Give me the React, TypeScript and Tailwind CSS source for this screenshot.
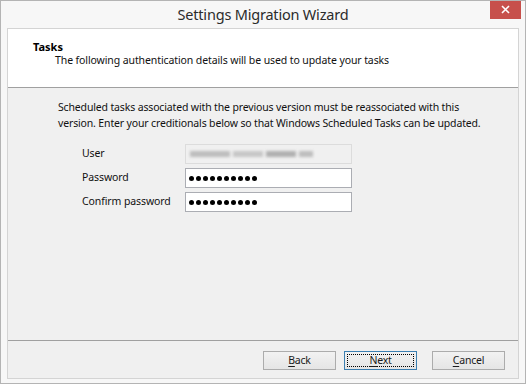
import React from 'react';

const font = { fontFamily: '"Noto Sans", "Open Sans", sans-serif' };

const Dots: React.FC = () => (
  <div className="flex items-center gap-[2px]">
    {Array.from({ length: 10 }).map((_, i) => (
      <span key={i} className="block w-[5px] h-[5px] rounded-full bg-black" />
    ))}
  </div>
);

const Btn: React.FC<{ label: string; first: string; focused?: boolean }> = ({ label, first, focused }) => (
  <button
    className={`w-[73px] h-[19px] flex items-center justify-center text-[10.5px] tracking-[-0.2px] text-[#1a1a1a] border bg-gradient-to-b from-[#f2f2f2] to-[#e5e5e5] ${
      focused ? 'border-[#3c7fb1] p-[2px]' : 'border-[#acacac]'
    }`}
  >
    {focused ? (
      <span className="w-full h-full flex items-center justify-center border border-dotted border-black">
        <span className="underline underline-offset-2">{first}</span>
        {label.slice(1)}
      </span>
    ) : (
      <>
        <span className="underline underline-offset-2">{first}</span>
        {label.slice(1)}
      </>
    )}
  </button>
);

export default function App() {
  return (
    <div
      style={font}
      className="w-[526px] h-[384px] bg-[#f7f7f7] border border-[#b4b4b4] flex flex-col overflow-hidden"
    >
      {/* title bar */}
      <div className="h-[27px] relative flex items-center justify-center shrink-0">
        <span className="text-[14.5px] tracking-[-0.2px] text-[#2b2b2b] mt-[1px]">Settings Migration Wizard</span>
        <div className="absolute top-[-1px] right-[4px] w-[31px] h-[19px] bg-[#c7504b] flex items-center justify-center">
          <svg width="9" height="9" viewBox="0 0 9 9">
            <path d="M1 1 L8 8 M8 1 L1 8" stroke="white" strokeWidth="1.6" />
          </svg>
        </div>
      </div>

      {/* client area */}
      <div className="mx-[6px] mb-[4px] flex-1 flex flex-col border border-[#d4d4d4] bg-[#f0f0f0]">
        <div className="h-[59px] bg-white border-b border-[#a0a0a0] pl-[25px] pt-[11px] shrink-0">
          <div className="text-[11px] font-bold text-black leading-[13px]">Tasks</div>
          <div className="text-[10.5px] tracking-[-0.1px] text-[#111] pl-[22px] leading-[15px]">
            The following authentication details will be used to update your tasks
          </div>
        </div>

        <div className="flex-1 pl-[50px] pt-[11px]">
          <div className="text-[10.5px] tracking-[-0.15px] leading-[16px] text-[#111] whitespace-nowrap">
            <div>Scheduled tasks associated with the previous version must be reassociated with this</div>
            <div>version. Enter your creditionals below so that Windows Scheduled Tasks can be updated.</div>
          </div>

          <div className="mt-[13px] pl-[24px] flex flex-col gap-[4px] text-[10.5px] tracking-[-0.1px] text-[#111]">
            <div className="flex items-center">
              <span className="w-[103px]">User</span>
              <div className="w-[167px] h-[20px] border border-[#dcdcdc] bg-[#f0f0f0] flex items-center pl-[4px]">
                <span className="flex items-center gap-[3px] blur-[1.5px] opacity-80">
                  <span className="w-[40px] h-[6px] bg-[#b0b0b0]" />
                  <span className="w-[30px] h-[6px] bg-[#bcbcbc]" />
                  <span className="w-[30px] h-[6px] bg-[#a0a0a0]" />
                  <span className="w-[14px] h-[6px] bg-[#b0b0b0]" />
                </span>
              </div>
            </div>
            <div className="flex items-center">
              <span className="w-[103px]">Password</span>
              <div className="w-[167px] h-[20px] border border-[#abadb3] bg-white flex items-center pl-[3px]">
                <Dots />
              </div>
            </div>
            <div className="flex items-center">
              <span className="w-[103px]">Confirm password</span>
              <div className="w-[167px] h-[20px] border border-[#abadb3] bg-white flex items-center pl-[3px]">
                <Dots />
              </div>
            </div>
          </div>
        </div>

        <div className="h-[38px] border-t border-[#a0a0a0] flex items-start justify-end pt-[10px] pr-[13px] shrink-0">
          <Btn label="Back" first="B" />
          <div className="w-[8px]" />
          <Btn label="Next" first="N" focused />
          <div className="w-[15px]" />
          <Btn label="Cancel" first="C" />
        </div>
      </div>
    </div>
  );
}
